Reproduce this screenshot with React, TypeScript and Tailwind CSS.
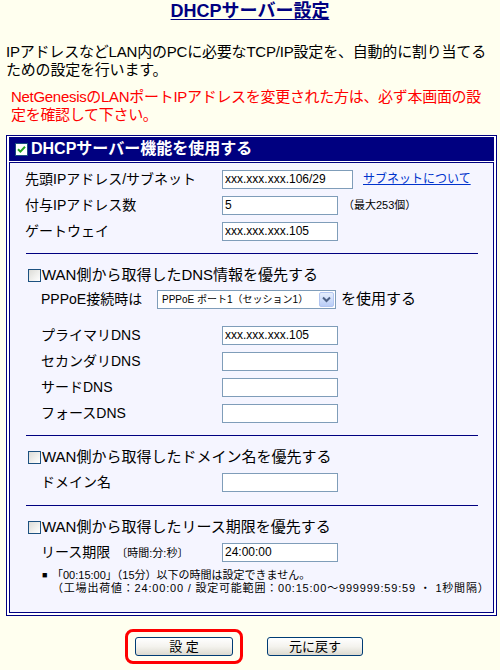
import React from 'react'

const NAVY = 'border-[#000080]'

function XpCheckbox({ checked = false }: { checked?: boolean }) {
  return (
    <span className="inline-flex h-[13px] w-[13px] min-w-[13px] shrink-0 items-center justify-center border border-[#1c5180] bg-linear-to-br from-[#dcdcd7] to-white">
      {checked && (
        <svg width="9" height="9" viewBox="0 0 9 9" className="shrink-0">
          <path d="M1 4.2 L3.4 6.6 L8 1.8" fill="none" stroke="#21a121" strokeWidth="2" />
        </svg>
      )}
    </span>
  )
}

function TextBox({ value = '', wide = false }: { value?: string; wide?: boolean }) {
  return (
    <input
      readOnly
      value={value}
      className={`h-[19px] ${wide ? 'w-[131px]' : 'w-[116px]'} border border-[#7f9db9] bg-white px-[2px] text-[12px] leading-[17px] text-black outline-none`}
    />
  )
}

function Row({
  label,
  indent = false,
  children,
}: {
  label: React.ReactNode
  indent?: boolean
  children?: React.ReactNode
}) {
  return (
    <div className="flex h-[26px] items-center">
      <div
        className={`${indent ? 'ml-[31px] w-[181px]' : 'ml-[15px] w-[197px]'} shrink-0 whitespace-nowrap text-[14px] leading-[18px]`}
      >
        {label}
      </div>
      {children}
    </div>
  )
}

function CheckRow({ text, className }: { text: string; className: string }) {
  return (
    <div className={`flex h-[24px] items-center pl-[18px] ${className}`}>
      <XpCheckbox />
      <span className="ml-[1px] whitespace-nowrap text-[15px] leading-[18px]">{text}</span>
    </div>
  )
}

function Divider({ className }: { className: string }) {
  return <div className={`ml-[16px] h-px w-[452px] bg-[#000080] ${className}`} />
}

function XpButton({ label, className }: { label: string; className: string }) {
  return (
    <button
      className={`flex h-[19px] items-center justify-center rounded-[3px] border border-[#003c74] bg-linear-to-b from-white via-[#f4f3ee] to-[#dcdad0] text-[13px] leading-none text-black ${className}`}
    >
      {label}
    </button>
  )
}

export default function App() {
  return (
    <div
      className="h-[670px] w-[500px] overflow-hidden bg-[#ffffef] text-black"
      style={{ fontFamily: '"Liberation Sans", "Noto Sans CJK JP", sans-serif' }}
    >
      <h1 className="h-[22px] text-center text-[18px] font-bold leading-[22px] text-[#000080] underline underline-offset-[2px]">
        DHCPサーバー設定
      </h1>

      <p className="mt-[21px] pl-[6px] whitespace-nowrap text-[15px] leading-[18px] tracking-[-0.2px]">
        IPアドレスなどLAN内のPCに必要なTCP/IP設定を、自動的に割り当てる
        <br />
        ための設定を行います。
      </p>

      <p className="mt-[9px] pl-[11px] whitespace-nowrap text-[15px] leading-[18px] tracking-[-0.3px] text-[#ff0000]">
        NetGenesisのLANポートIPアドレスを変更された方は、必ず本画面の設
        <br />
        定を確認して下さい。
      </p>

      <div className={`ml-[6px] mt-[11px] w-[491px] border ${NAVY} bg-white px-[2px] pt-[1px] pb-[2px]`}>
        <div className="flex h-[24px] items-center bg-[#000080] pl-[6px]">
          <span className="inline-flex h-[13px] w-[13px] shrink-0 items-center justify-center border border-[#1c5180] bg-white">
            <svg width="9" height="9" viewBox="0 0 9 9">
              <path d="M1 4.2 L3.4 6.6 L8 1.8" fill="none" stroke="#21a121" strokeWidth="2" />
            </svg>
          </span>
          <span className="ml-[3px] whitespace-nowrap text-[16px] font-bold leading-[20px] text-white">
            DHCPサーバー機能を使用する
          </span>
        </div>

        <div className={`mt-[1px] border ${NAVY} bg-[#f5f5ff] pt-[3px] pb-[17px]`}>
          <Row label="先頭IPアドレス/サブネット">
            <TextBox value="xxx.xxx.xxx.106/29" wide />
            <a className="ml-[10px] whitespace-nowrap text-[12px] leading-[16px] text-[#0033cc] underline">
              サブネットについて
            </a>
          </Row>
          <Row label="付与IPアドレス数">
            <TextBox value="5" />
            <span className="ml-[5px] whitespace-nowrap text-[11px]">（最大253個）</span>
          </Row>
          <Row label="ゲートウェイ">
            <TextBox value="xxx.xxx.xxx.105" />
          </Row>

          <Divider className="mt-[9px]" />

          <CheckRow text="WAN側から取得したDNS情報を優先する" className="mt-[9px]" />
          <div className="mt-[1px] flex h-[22px] items-center">
            <span className="ml-[31px] w-[116px] shrink-0 whitespace-nowrap text-[14px] leading-[18px]">
              PPPoE接続時は
            </span>
            <div className="flex h-[19px] w-[179px] shrink-0 items-center border border-[#7f9db9] bg-white">
              <span className="min-w-0 flex-1 whitespace-nowrap pl-[4px] text-[10px] leading-[15px]">
                PPPoE ポート1（セッション1）
              </span>
              <span className="mr-[1px] flex h-[15px] w-[15px] shrink-0 items-center justify-center rounded-[2px] border border-[#b2c5f0] bg-linear-to-b from-[#e6eefc] to-[#b9cdf7]">
                <svg width="9" height="7" viewBox="0 0 9 7">
                  <path d="M1 1.5 L4.5 5 L8 1.5" fill="none" stroke="#4d6185" strokeWidth="2" />
                </svg>
              </span>
            </div>
            <span className="ml-[5px] whitespace-nowrap text-[15px] leading-[18px]">を使用する</span>
          </div>

          <div className="mt-[12px]">
            <Row label="プライマリDNS" indent>
              <TextBox value="xxx.xxx.xxx.105" />
            </Row>
            <Row label="セカンダリDNS" indent>
              <TextBox />
            </Row>
            <Row label="サードDNS" indent>
              <TextBox />
            </Row>
            <Row label="フォースDNS" indent>
              <TextBox />
            </Row>
          </div>

          <Divider className="mt-[9px]" />

          <CheckRow text="WAN側から取得したドメイン名を優先する" className="mt-[9px]" />
          <Row label="ドメイン名" indent>
            <TextBox />
          </Row>

          <Divider className="mt-[10px]" />

          <CheckRow text="WAN側から取得したリース期限を優先する" className="mt-[9px]" />
          <Row
            label={
              <>
                リース期限
                <span className="ml-[6px] text-[11px]">〔時間:分:秒〕</span>
              </>
            }
            indent
          >
            <TextBox value="24:00:00" />
          </Row>

          <div className="mt-[4px] ml-[32px] flex text-[11px] leading-[13px]">
            <span className="w-[10px] text-[9px]">■</span>
            <p className="whitespace-nowrap">
              「00:15:00」（15分）以下の時間は設定できません。
              <br />
              <span className="tracking-[0.8px]">
                （工場出荷値：24:00:00 / 設定可能範囲：00:15:00～999999:59:59 ・ 1秒間隔）
              </span>
            </p>
          </div>
        </div>
      </div>

      <div className="mt-[13px] flex items-center pl-[125px]">
        <div className="rounded-[8px] border-[3px] border-[#ff0000] px-[7px] py-[5px]">
          <XpButton label="設 定" className="w-[98px]" />
        </div>
        <XpButton label="元に戻す" className="ml-[24px] w-[96px]" />
      </div>
    </div>
  )
}
